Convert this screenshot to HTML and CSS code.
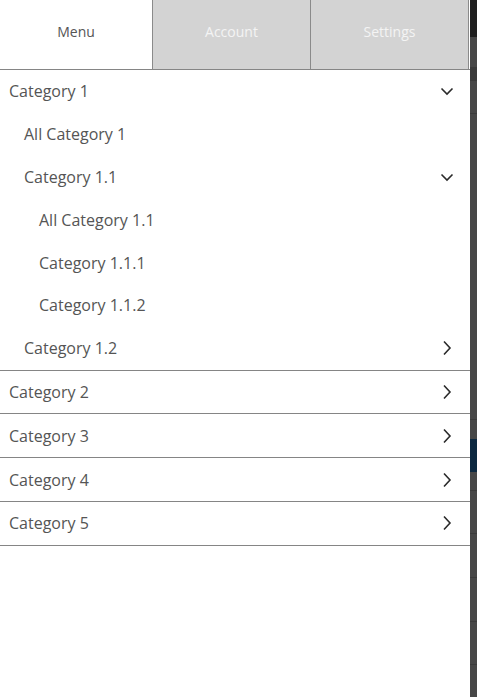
FILE: index.html
```html
<!DOCTYPE html>
<html lang="en">
<head>
    <meta charset="UTF-8">
    <meta name="viewport" content="width=device-width, initial-scale=1.0">
    <title>Menu</title>
    <link rel="stylesheet" href="styles.css">
</head>
<body>
    <div class="drawer">
        <div class="tabs">
            <div class="tab active">Menu</div>
            <div class="tab">Account</div>
            <div class="tab last">Settings</div>
        </div>

        <ul class="menu">
            <li class="group">
                <div class="item lvl-0">Category 1
                    <svg class="chev" width="14" height="14" viewBox="0 0 14 14"><path d="M1.5 4.5 L7 10 L12.5 4.5" /></svg>
                </div>
                <div class="item lvl-1">All Category 1</div>
                <div class="item lvl-1">Category 1.1
                    <svg class="chev" width="14" height="14" viewBox="0 0 14 14"><path d="M1.5 4.5 L7 10 L12.5 4.5" /></svg>
                </div>
                <div class="item lvl-2">All Category 1.1</div>
                <div class="item lvl-2">Category 1.1.1</div>
                <div class="item lvl-2">Category 1.1.2</div>
                <div class="item lvl-1">Category 1.2
                    <svg class="chev" width="14" height="16" viewBox="0 0 14 16"><path d="M4 1.5 L10 8 L4 14.5" /></svg>
                </div>
            </li>
            <li class="group">
                <div class="item lvl-0">Category 2
                    <svg class="chev" width="14" height="16" viewBox="0 0 14 16"><path d="M4 1.5 L10 8 L4 14.5" /></svg>
                </div>
            </li>
            <li class="group">
                <div class="item lvl-0">Category 3
                    <svg class="chev" width="14" height="16" viewBox="0 0 14 16"><path d="M4 1.5 L10 8 L4 14.5" /></svg>
                </div>
            </li>
            <li class="group">
                <div class="item lvl-0">Category 4
                    <svg class="chev" width="14" height="16" viewBox="0 0 14 16"><path d="M4 1.5 L10 8 L4 14.5" /></svg>
                </div>
            </li>
            <li class="group">
                <div class="item lvl-0">Category 5
                    <svg class="chev" width="14" height="16" viewBox="0 0 14 16"><path d="M4 1.5 L10 8 L4 14.5" /></svg>
                </div>
            </li>
        </ul>
    </div>

    <!-- page behind the drawer -->
    <div class="backdrop">
        <div class="bd-top"></div>
        <div class="bd-gap"></div>
        <div class="bd-marks"></div>
        <div class="bd-row bd-h32"></div>
        <div class="bd-row bd-h305"></div>
        <div class="bd-gap19"></div>
        <div class="bd-blue"></div>
        <div class="bd-row bd-h18"></div>
        <div class="bd-row bd-h42"></div>
        <div class="bd-row bd-h43"></div>
        <div class="bd-row bd-h43"></div>
        <div class="bd-row bd-h42"></div>
    </div>
</body>
</html>
```

FILE: styles.css
```css
* {
    margin: 0;
    padding: 0;
    box-sizing: border-box;
}

body {
    font-family: 'Open Sans', 'Noto Sans', sans-serif;
    background: #474747;
    height: 100vh;
    overflow: hidden;
    display: flex;
}

.drawer {
    width: 470px;
    flex-shrink: 0;
    background: #fff;
    height: 100%;
}

.tabs {
    display: grid;
    grid-template-columns: 152px 158px 159px;
    height: 70px;
    border-bottom: 1px solid #858585;
}

.tab {
    display: flex;
    align-items: center;
    justify-content: center;
    padding-bottom: 6px;
    font-size: 14px;
    background: #d3d3d3;
    color: #f4f4f4;
    border-left: 1px solid #8a8a8a;
}

.tab.active {
    background: #fff;
    color: #555;
    border-left: none;
}

.tab.last {
    border-right: 1px solid #8a8a8a;
}

.menu {
    list-style: none;
}

.group {
    border-bottom: 1px solid #858585;
}

.item {
    height: 42.8px;
    display: flex;
    align-items: center;
    justify-content: space-between;
    padding-right: 16px;
    font-size: 16px;
    color: #555;
}

.lvl-0 { padding-left: 9px; }
.lvl-1 { padding-left: 24px; }
.lvl-2 { padding-left: 39px; }

.chev {
    fill: none;
    stroke: #2a2a2a;
    stroke-width: 1.6;
}

.backdrop {
    flex: 1;
    background: #474747;
}

.bd-top {
    height: 37px;
    background: #1f1f1f;
}

.bd-gap { height: 30px; }

.bd-marks {
    height: 14px;
    background: #3a3a3a;
}

.bd-row {
    border-bottom: 1px solid #3b3b3b;
}

.bd-h32 { height: 33px; }
.bd-h305 { height: 306px; }
.bd-h18 { height: 19px; }
.bd-h42 { height: 43px; }
.bd-h43 { height: 44px; }
.bd-gap19 { height: 19px; }

.bd-blue {
    height: 33px;
    background: #0c2840;
}
```
